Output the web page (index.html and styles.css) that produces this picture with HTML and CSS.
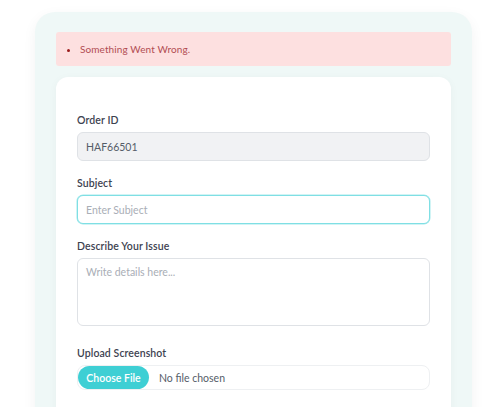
FILE: index.html
```html
<!DOCTYPE html>
<html lang="en">
<head>
  <meta charset="UTF-8" />
  <meta name="viewport" content="width=device-width, initial-scale=1.0" />
  <title>Raise a Ticket</title>
  <link rel="stylesheet" href="styles.css">
</head>
<body>
  <div class="ticket">
    <div class="alert" role="alert">
      <ul>
        <li>Something Went Wrong.</li>
      </ul>
    </div>

    <form class="ticket-form">
      <div class="field">
        <label for="order-id">Order ID</label>
        <input type="text" id="order-id" value="HAF66501" readonly />
      </div>

      <div class="field">
        <label for="subject">Subject</label>
        <input type="text" id="subject" class="focused" placeholder="Enter Subject" />
      </div>

      <div class="field field-wide">
        <label for="issue">Describe Your Issue</label>
        <textarea id="issue" placeholder="Write details here..."></textarea>
      </div>

      <div class="field">
        <label for="screenshot">Upload Screenshot</label>
        <input type="file" id="screenshot" />
      </div>
    </form>
  </div>
</body>
</html>
```

FILE: styles.css
```css
body {
  margin: 0;
  font-family: Lato, "Open Sans", sans-serif;
  background: #ffffff;
  color: #3b404c;
}

.ticket {
  margin: 12px 0 0 35px;
  width: 395px;
  min-height: 420px;
  padding: 20px 21px;
  background: #eff8f7;
  border-radius: 20px;
  box-shadow: 0 4px 14px rgba(0, 0, 0, 0.05);
}

.alert {
  background: #fde0e0;
  border-radius: 3px;
  height: 34px;
  display: flex;
  align-items: center;
  color: #b24d53;
  font-size: 10px;
  letter-spacing: 0.1px;
}

.alert ul {
  margin: 0;
  padding-left: 24px;
}

.alert li::marker {
  color: #9b1c1c;
}

.ticket-form {
  margin-top: 11px;
  background: #ffffff;
  border-radius: 12px;
  padding: 35px 21px 20px;
  box-shadow: 0 2px 10px rgba(0, 0, 0, 0.04);
}

.field {
  margin-bottom: 14px;
}

.field-wide {
  margin-bottom: 19px;
}

label {
  display: block;
  font-size: 10.5px;
  font-weight: 600;
  line-height: 16px;
  margin-bottom: 4px;
  color: #3d4250;
  letter-spacing: 0.1px;
}

input[type="text"],
textarea {
  display: block;
  box-sizing: border-box;
  width: 100%;
  font-family: inherit;
  font-size: 10.5px;
  color: #555d68;
  border: 1px solid #dfe2e6;
  border-radius: 6px;
  padding: 0 8px;
  outline: none;
}

input[type="text"] {
  height: 29px;
}

input[readonly] {
  background: #f1f2f4;
}

/* subject box keeps the highlighted outline */
input.focused {
  border-color: #7fdfe4;
  box-shadow: 0 0 0 0.5px #a4e9ec;
}

textarea {
  height: 68px;
  padding-top: 7px;
  resize: none;
}

::placeholder {
  color: #a9aeb6;
}

input[type="file"] {
  display: block;
  box-sizing: border-box;
  width: 100%;
  height: 25px;
  border: 1px solid #eef0f2;
  border-radius: 8px;
  font-family: inherit;
  font-size: 10.5px;
  color: #555d68;
}

input[type="file"]::file-selector-button {
  height: 23px;
  width: 71px;
  margin: 0 10px 0 0;
  padding: 0;
  border: none;
  border-radius: 12px;
  background: #3ecfd4;
  color: #ffffff;
  font-family: inherit;
  font-size: 10.5px;
  font-weight: 600;
  cursor: pointer;
}
```
